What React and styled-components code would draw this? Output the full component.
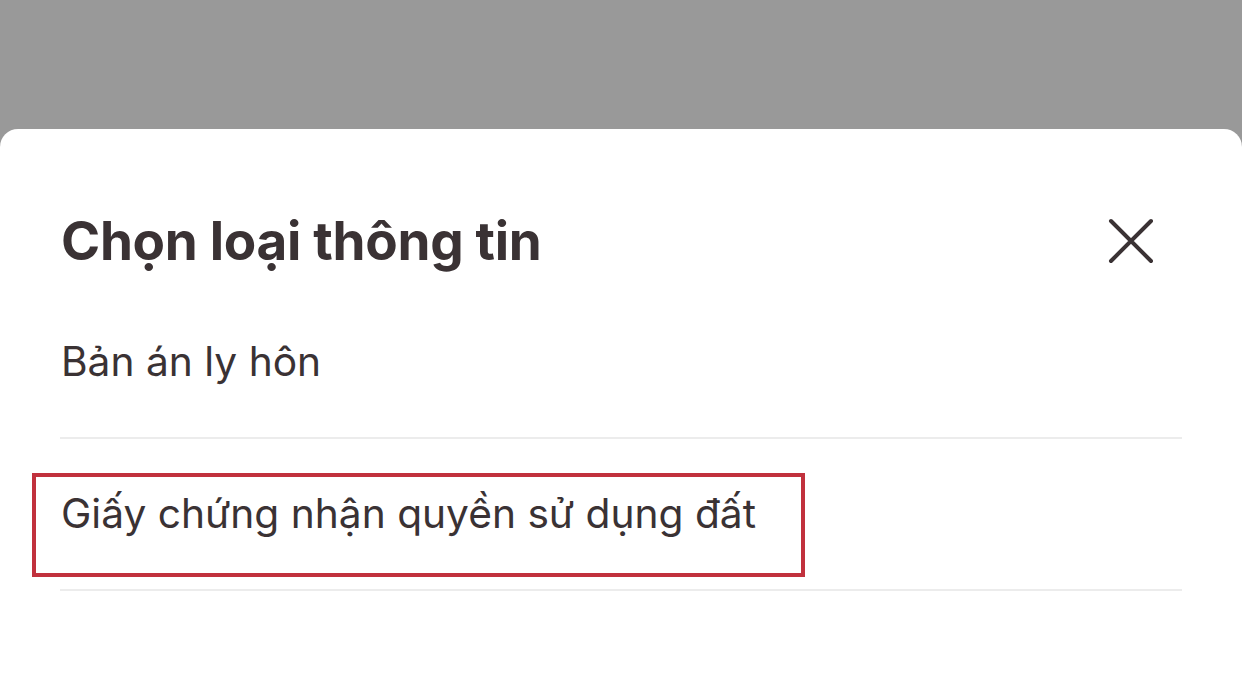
import React from "react";
import styled, { createGlobalStyle } from "styled-components";

const GlobalStyle = createGlobalStyle`
  html, body {
    margin: 0;
    padding: 0;
    background: #999999;
  }
  body {
    font-family: Inter, "Noto Sans", sans-serif;
  }
`;

const items = [
  { id: 1, label: "Bản án ly hôn" },
  { id: 2, label: "Giấy chứng nhận quyền sử dụng đất", highlighted: true },
];

const CloseIcon = () => (
  <svg width="46" height="46" viewBox="0 0 46 46" fill="none">
    <path
      d="M3 3L43 43M43 3L3 43"
      stroke="#3a3234"
      strokeWidth="4"
      strokeLinecap="round"
    />
  </svg>
);

const App = () => {
  return (
    <Backdrop>
      <GlobalStyle />
      <Sheet>
        <Header>
          <Title>Chọn loại thông tin</Title>
          <CloseButton aria-label="Đóng">
            <CloseIcon />
          </CloseButton>
        </Header>
        <List>
          {items.map((item) => (
            <Row key={item.id}>
              <Label>{item.label}</Label>
              {item.highlighted && <Highlight />}
            </Row>
          ))}
        </List>
      </Sheet>
    </Backdrop>
  );
};

const Backdrop = styled.div`
  width: 1242px;
  height: 696px;
  background: #999999;
  display: flex;
  flex-direction: column;
  padding-top: 129px;
  box-sizing: border-box;
  overflow: hidden;
`;

const Sheet = styled.div`
  flex: 1;
  background: #ffffff;
  border-radius: 18px 18px 0 0;
  padding: 72px 60px 0 60px;
  display: flex;
  flex-direction: column;
`;

const Header = styled.div`
  height: 80px;
  display: flex;
  align-items: center;
  justify-content: space-between;
`;

const Title = styled.h1`
  margin: 0 0 0 1px;
  font-size: 53px;
  font-weight: 700;
  letter-spacing: -0.3px;
  color: #3a3234;
  line-height: 1;
`;

const CloseButton = styled.button`
  width: 46px;
  height: 46px;
  margin-right: 28px;
  padding: 0;
  border: none;
  background: none;
  display: flex;
  align-items: center;
  justify-content: center;
  cursor: pointer;
`;

const List = styled.div`
  margin-top: 6px;
  display: flex;
  flex-direction: column;
`;

const Row = styled.div`
  position: relative;
  height: 150px;
  display: flex;
  align-items: center;
  border-bottom: 2px solid #ececec;
`;

const Label = styled.span`
  margin-left: 1px;
  font-size: 40.7px;
  font-weight: 400;
  color: #3a3234;
  line-height: 1;
`;

const Highlight = styled.div`
  position: absolute;
  left: -28px;
  top: 34px;
  width: 773px;
  height: 104px;
  border: 4px solid #c1313d;
  box-sizing: border-box;
  pointer-events: none;
`;

export default App;
